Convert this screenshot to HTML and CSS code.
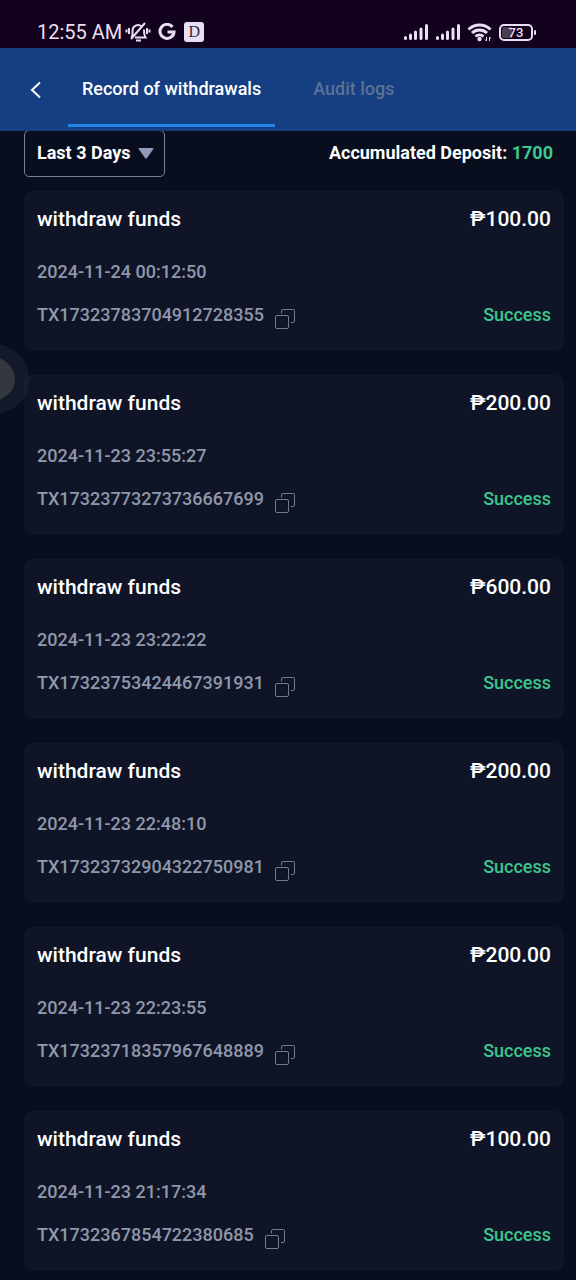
FILE: index.html
```
<!DOCTYPE html>
<html lang="en">
<head>
<meta charset="utf-8">
<meta name="viewport" content="width=device-width, initial-scale=1">
<title>Record of withdrawals</title>
<link rel="stylesheet" href="styles.css">
</head>
<body>
<svg class="defs" aria-hidden="true">
  <symbol id="copy" viewBox="0 0 20 20"><path d="M6.500 4.500V2A1.500 1.500 0 0 1 8 .5H18.500a1 1 0 0 1 1 1V12a1.500 1.500 0 0 1-1.500 1.500H16"/><rect x=".5" y="6.500" width="13" height="13" rx="1.500"/></symbol>
  <symbol id="signal" viewBox="0 0 26 18"><path d="M2.500 14.500v1M7.500 12v3.500M12.500 9v6.500M18 6v9.500M23.500 2.500v13"/></symbol>
</svg>
<div class="status">
  <div class="status-group">
    <span class="clock">12:55 AM</span>
    <svg class="bell" viewBox="0 0 26 22" aria-hidden="true"><path d="M6.500 16.500C8 14.500 7.500 12 7.500 9.500a5.500 5.500 0 0 1 9-4.200M19 8.500c-.2 3.500.2 6 1.500 8H10M4 7v6M1.500 8.500v3M22 7v6M24.500 8.500v3M6 18 20 2M11 19.500h5"/></svg>
    <svg class="google" viewBox="0 0 18 18" aria-hidden="true"><path d="M14.500 4A7 7 0 1 0 16 9H9.500"/></svg>
    <span class="app-badge">D</span>
  </div>
  <div class="status-group status-right">
    <svg class="signal" aria-hidden="true"><use href="#signal"/></svg>
    <svg class="signal" aria-hidden="true"><use href="#signal"/></svg>
    <svg class="wifi" viewBox="0 0 26 20" aria-hidden="true"><path class="arc" d="M1.500 7.500a16 16 0 0 1 22 0M5 11a11 11 0 0 1 15 0M8.500 14.500a6 6 0 0 1 8 0"/><circle cx="12.500" cy="17" r="2.200"/><path class="data" d="M19.500 15v4l-1.500-1.500M22.500 19v-4l1.500 1.500"/></svg>
    <span class="battery">73</span>
  </div>
</div>
<header class="header">
  <button class="back" type="button" aria-label="Back"><svg viewBox="0 0 12 18" aria-hidden="true"><path d="M10 1.500 2 9l8 7.500"/></svg></button>
  <nav class="tabs">
    <a class="tab active" href="#withdrawals" aria-current="page">Record of withdrawals</a>
    <a class="tab" href="#audit">Audit logs</a>
  </nav>
</header>
<main class="main" id="withdrawals">
  <div class="filter">
    <div class="period">
      <select aria-label="Period"><option>Last 3 Days</option></select>
      <svg viewBox="0 0 16 11" aria-hidden="true"><path d="M1.500 0h13q1.500 0 .7 1.200L9 10q-1 1.200-2 0L.8 1.200Q0 0 1.500 0"/></svg>
    </div>
    <p class="total">Accumulated Deposit: <span>1700</span></p>
  </div>
  <ul class="records">
    <li class="card">
      <div class="row title"><h2>withdraw funds</h2><strong>₱100.00</strong></div>
      <time>2024-11-24 00:12:50</time>
      <div class="row detail"><span class="tx">TX17323783704912728355</span><button class="copy" type="button" aria-label="Copy"><svg><use href="#copy"/></svg></button><span class="state">Success</span></div>
    </li>
    <li class="card">
      <div class="row title"><h2>withdraw funds</h2><strong>₱200.00</strong></div>
      <time>2024-11-23 23:55:27</time>
      <div class="row detail"><span class="tx">TX17323773273736667699</span><button class="copy" type="button" aria-label="Copy"><svg><use href="#copy"/></svg></button><span class="state">Success</span></div>
    </li>
    <li class="card">
      <div class="row title"><h2>withdraw funds</h2><strong>₱600.00</strong></div>
      <time>2024-11-23 23:22:22</time>
      <div class="row detail"><span class="tx">TX17323753424467391931</span><button class="copy" type="button" aria-label="Copy"><svg><use href="#copy"/></svg></button><span class="state">Success</span></div>
    </li>
    <li class="card">
      <div class="row title"><h2>withdraw funds</h2><strong>₱200.00</strong></div>
      <time>2024-11-23 22:48:10</time>
      <div class="row detail"><span class="tx">TX17323732904322750981</span><button class="copy" type="button" aria-label="Copy"><svg><use href="#copy"/></svg></button><span class="state">Success</span></div>
    </li>
    <li class="card">
      <div class="row title"><h2>withdraw funds</h2><strong>₱200.00</strong></div>
      <time>2024-11-23 22:23:55</time>
      <div class="row detail"><span class="tx">TX17323718357967648889</span><button class="copy" type="button" aria-label="Copy"><svg><use href="#copy"/></svg></button><span class="state">Success</span></div>
    </li>
    <li class="card">
      <div class="row title"><h2>withdraw funds</h2><strong>₱100.00</strong></div>
      <time>2024-11-23 21:17:34</time>
      <div class="row detail"><span class="tx">TX1732367854722380685</span><button class="copy" type="button" aria-label="Copy"><svg><use href="#copy"/></svg></button><span class="state">Success</span></div>
    </li>
  </ul>
</main>
<button class="assist" type="button" aria-label="Quick menu"></button>
</body>
</html>
```
FILE: styles.css
```
* { box-sizing: border-box; }
body {
  margin: 0;
  background: #080e1d;
  color: #fff;
  font: 500 18px/24px Roboto, "Noto Sans", sans-serif;
}
button { padding: 0; border: 0; background: none; color: inherit; font: inherit; }
h2, p, ul { margin: 0; padding: 0; }
svg { display: block; fill: none; }
.defs { position: absolute; width: 0; height: 0; }

.status {
  display: flex;
  align-items: center;
  justify-content: space-between;
  height: 48px;
  padding: 16px 43px 0 37px;
  background: #12021d;
  color: #eadff0;
}
.status-group { display: flex; align-items: center; }
.clock { font-size: 20px; font-weight: 400; }
.bell { width: 26px; height: 22px; margin-left: 3px; stroke: currentColor; stroke-width: 2; }
.google { width: 18px; height: 18px; margin-left: 7px; stroke: currentColor; stroke-width: 3; }
.app-badge {
  width: 20px;
  height: 20px;
  margin-left: 8px;
  border-radius: 3px;
  background: #eadff0;
  color: #34293c;
  font: 400 16px/20px "Liberation Serif", serif;
  text-align: center;
}
.status-right { gap: 6px; }
.signal { width: 26px; height: 18px; stroke: currentColor; stroke-width: 3; stroke-linecap: round; }
.wifi { width: 26px; height: 20px; fill: currentColor; }
.wifi .arc { fill: none; stroke: currentColor; stroke-width: 3; }
.wifi .data { fill: none; stroke: currentColor; stroke-width: 1; }
.battery {
  position: relative;
  width: 34px;
  height: 17px;
  border: 2px solid currentColor;
  border-radius: 5px;
  background: linear-gradient(90deg, #4a3d53 35%, transparent 35%) content-box;
  padding: 1px;
  font-size: 13px;
  line-height: 11px;
  text-align: center;
}
.battery::after {
  content: "";
  position: absolute;
  top: 4px;
  right: -5px;
  width: 2px;
  height: 5px;
  border-radius: 1px;
  background: currentColor;
}

.header {
  position: relative;
  z-index: 1;
  display: flex;
  height: 83px;
  padding-left: 24px;
  background: #153f82;
}
.back { display: grid; place-items: center; width: 24px; }
.back svg { width: 12px; height: 18px; stroke: #fff; stroke-width: 2; }
.tabs { display: flex; gap: 24px; margin-left: 20px; }
.tab {
  display: flex;
  align-items: center;
  padding: 6px 14px 0;
  margin-bottom: 4px;
  border-bottom: 3px solid transparent;
  color: #5c7194;
  text-decoration: none;
}
.tab.active { border-color: #2385e4; color: #fff; }

.main { padding: 0 12px 9px 24px; }
.filter {
  display: flex;
  align-items: flex-start;
  justify-content: space-between;
  padding-right: 11px;
  font-weight: 700;
}
.period { position: relative; margin-top: -1px; }
.period select {
  appearance: none;
  width: 141px;
  height: 47px;
  padding: 0 12px 2px;
  border: 1px solid #7c808b;
  border-radius: 5px;
  background: transparent;
  color: #fff;
  font: inherit;
}
.period svg {
  position: absolute;
  top: 18px;
  right: 11px;
  width: 16px;
  height: 11px;
  fill: #9099b5;
  pointer-events: none;
}
.total { padding-top: 10px; }
.total span { color: #3dc68d; }

.records {
  display: grid;
  gap: 24px;
  margin-top: 14px;
  list-style: none;
}
.card {
  display: grid;
  padding: 16px 13px 24px;
  border-radius: 8px;
  background: #0f1526;
}
.row { display: flex; align-items: center; }
.title { justify-content: space-between; }
.title h2, .title strong { font-size: 21px; font-weight: 500; line-height: 24px; }
.card time { margin-top: 29px; color: #8f97ab; }
.detail { margin-top: 19px; color: #8f97ab; }
.copy { margin: 4px 0 -4px 11px; color: #747b8b; }
.copy svg { width: 20px; height: 20px; stroke: currentColor; stroke-width: 1; overflow: visible; }
.state { margin-left: auto; color: #3dc68d; }

.assist {
  position: absolute;
  top: 344px;
  left: -41px;
  width: 70px;
  height: 70px;
  border: 14px solid rgb(120 130 140 / 10%);
  border-radius: 50%;
  background: #33373f padding-box;
}
```
